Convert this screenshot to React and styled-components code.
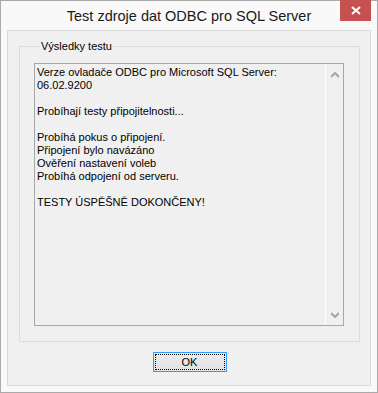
import React from 'react'
import styled, { createGlobalStyle } from 'styled-components'

const GlobalStyle = createGlobalStyle`
  html, body {
    margin: 0;
    padding: 0;
    background: #ffffff;
  }
  * { box-sizing: border-box; }
`

const Window = styled.div`
  position: relative;
  width: 378px;
  height: 393px;
  border: 1px solid #aaaaaa;
  background: #f9f9f9;
  padding: 0 6px 6px 6px;
  display: flex;
  flex-direction: column;
  font-family: "Liberation Sans", Arial, sans-serif;
`

const TitleBar = styled.div`
  height: 29px;
  display: flex;
  align-items: center;
  justify-content: center;
  padding-top: 1px;
`

const Title = styled.div`
  font-size: 14.5px;
  color: #1a1a1a;
`

const CloseButton = styled.div`
  position: absolute;
  top: -1px;
  right: 6px;
  width: 31px;
  height: 21px;
  background: #c75050;
  display: flex;
  align-items: center;
  justify-content: center;
`

const Client = styled.div`
  flex: 1;
  border: 1px solid #dadada;
  background: #f0f0f0;
  padding: 9px 10px 0 11px;
  display: flex;
  flex-direction: column;
  align-items: stretch;
`

const Group = styled.fieldset`
  margin: 0;
  border: 1px solid #dcdcdc;
  padding: 10px 15px 15px 14px;
`

const Legend = styled.legend`
  font-size: 11px;
  line-height: 13px;
  color: #000;
  padding: 0 1px 0 1px;
  margin-left: 6px;
`

const TextBox = styled.div`
  height: 263px;
  border: 1px solid #a7a7a7;
  background: #f0f0f0;
  display: flex;
`

const TextArea = styled.div`
  flex: 1;
  padding: 2px 2px;
  font-size: 11px;
  line-height: 13px;
  color: #000;
  white-space: pre-line;
`

const ScrollBar = styled.div`
  width: 18px;
  border-left: 1px solid #ffffff;
  display: flex;
  flex-direction: column;
  justify-content: space-between;
  align-items: center;
  padding: 8px 0 7px;
`

const Arrow = ({ down }) => (
  <svg width="8" height="6" viewBox="0 0 8 6" style={{ transform: down ? 'rotate(180deg)' : 'none' }}>
    <path d="M0 5 L4 1 L8 5" fill="none" stroke="#a3a3a3" strokeWidth="2" />
  </svg>
)

const Footer = styled.div`
  display: flex;
  justify-content: center;
  padding-top: 10px;
`

const Button = styled.div`
  width: 74px;
  height: 20px;
  border: 1px solid #3399ff;
  background: linear-gradient(#ececec, #e2e2e2);
  padding: 1px;
`

const Focus = styled.div`
  height: 100%;
  border: 1px dotted #000;
  display: flex;
  align-items: center;
  justify-content: center;
  font-size: 11px;
  color: #000;
`

const lines = `Verze ovladače ODBC pro Microsoft SQL Server:
06.02.9200

Probíhají testy připojitelnosti...

Probíhá pokus o připojení.
Připojení bylo navázáno
Ověření nastavení voleb
Probíhá odpojení od serveru.

TESTY ÚSPĚŠNĚ DOKONČENY!`

export default function App() {
  return (
    <>
      <GlobalStyle />
      <Window>
        <TitleBar>
          <Title>Test zdroje dat ODBC pro SQL Server</Title>
        </TitleBar>
        <CloseButton>
          <svg width="10" height="9" viewBox="0 0 10 9">
            <path d="M1 1 L9 8 M9 1 L1 8" stroke="#ffffff" strokeWidth="2" />
          </svg>
        </CloseButton>
        <Client>
          <Group>
            <Legend>Výsledky testu</Legend>
            <TextBox>
              <TextArea>{lines}</TextArea>
              <ScrollBar>
                <Arrow />
                <Arrow down />
              </ScrollBar>
            </TextBox>
          </Group>
          <Footer>
            <Button>
              <Focus>OK</Focus>
            </Button>
          </Footer>
        </Client>
      </Window>
    </>
  )
}
